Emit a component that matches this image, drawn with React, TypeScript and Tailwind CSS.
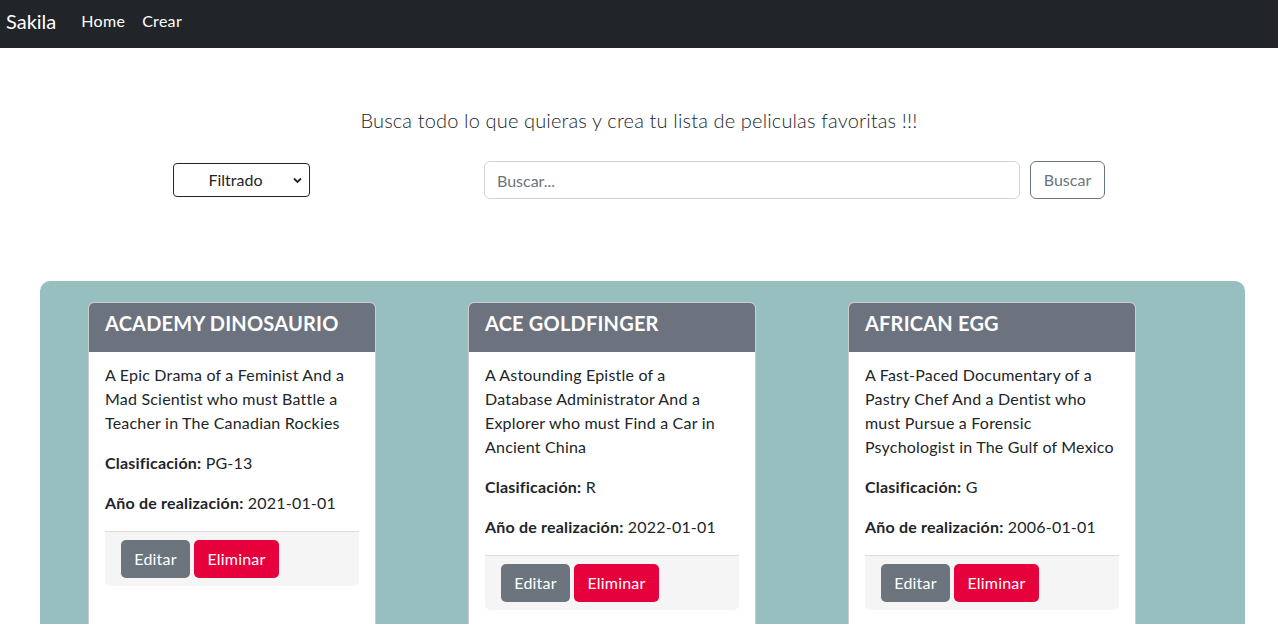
const movies = [
  {
    title: 'ACADEMY DINOSAURIO',
    description: ['A Epic Drama of a Feminist And a', 'Mad Scientist who must Battle a', 'Teacher in The Canadian Rockies'],
    rating: 'PG-13',
    year: '2021-01-01',
  },
  {
    title: 'ACE GOLDFINGER',
    description: ['A Astounding Epistle of a', 'Database Administrator And a', 'Explorer who must Find a Car in', 'Ancient China'],
    rating: 'R',
    year: '2022-01-01',
  },
  {
    title: 'AFRICAN EGG',
    description: ['A Fast-Paced Documentary of a', 'Pastry Chef And a Dentist who', 'must Pursue a Forensic', 'Psychologist in The Gulf of Mexico'],
    rating: 'G',
    year: '2006-01-01',
  },
];

function MovieCard({ movie }: { movie: (typeof movies)[number] }) {
  return (
    <div className="w-[288px] h-[360px] shrink-0 bg-white border border-black/20 rounded-[6px] overflow-hidden self-start">
      {/* Header */}
      <div className="bg-[#6c727e] px-4 pt-2 pb-4 h-[49px]">
        <h5 className="text-white text-[20px] font-bold leading-[24px] tracking-[0.2px]">{movie.title}</h5>
      </div>
      <div className="px-4 pt-[11px] text-[16px] leading-[24px] text-[#212529] tracking-[0.2px]">
        <p className="mb-4">
          {movie.description.map((line) => (
            <span key={line} className="block whitespace-nowrap">
              {line}
            </span>
          ))}
        </p>
        <p className="mb-4">
          <span className="font-bold">Clasificación:</span> {movie.rating}
        </p>
        <p className="mb-4">
          <span className="font-bold">Año de realización:</span> {movie.year}
        </p>
        <div className="border-t border-[#dcdcdc] bg-[#f5f5f5] rounded-b-[5px] px-4 py-2 flex gap-1">
          <button className="h-[38px] w-[69px] rounded-[5px] bg-[#6c757d] text-white">Editar</button>
          <button className="h-[38px] w-[85px] rounded-[5px] bg-[#e6003c] text-white">Eliminar</button>
        </div>
      </div>
    </div>
  );
}

export default function App() {
  return (
    <div className="h-[624px] overflow-hidden bg-white font-['Lato','Noto_Sans',sans-serif] text-[#212529]">
      {/* Navbar */}
      <nav className="h-12 bg-[#212529] flex items-center px-[6px] pb-[6px]">
        <span className="text-white text-[20px] mr-[25px]">Sakila</span>
        <a className="text-white text-[16px] mr-[17px] tracking-[0.3px]">Home</a>
        <a className="text-white text-[16px] tracking-[0.3px]">Crear</a>
      </nav>

      <h1 className="pt-[57px] text-center text-[20px] leading-[30px] font-light tracking-[0.15px]">
        Busca todo lo que quieras y crea tu lista de peliculas favoritas !!!
      </h1>

      {/* Search row */}
      <div className="mt-[26px] flex items-center pl-[173px]">
        <div className="relative w-[137px] h-[34px] border border-[#212529] rounded-[4px] flex items-center justify-center">
          <span className="text-[16px] pr-[12px]">Filtrado</span>
          <svg className="absolute right-[7px] top-[13px]" width="9" height="7" viewBox="0 0 9 7" fill="none">
            <path d="M1 1.5l3.5 3.5 3.5-3.5" stroke="#212529" strokeWidth="1.8" />
          </svg>
        </div>
        <input
          placeholder="Buscar..."
          className="ml-[174px] w-[536px] h-[38px] border border-[#ced4da] rounded-[6px] px-3 text-[16px] placeholder:text-[#6c757d] outline-none"
        />
        <button className="ml-[10px] w-[75px] h-[38px] border border-[#6c757d] rounded-[6px] text-[#6c757d] text-[16px]">
          Buscar
        </button>
      </div>

      {/* Movie list */}
      <div className="mt-[82px] ml-[40px] w-[1205px] h-[400px] bg-[#98bfbf] rounded-t-[10px] pt-[21px] pl-[48px] flex gap-[92px]">
        {movies.map((m) => (
          <MovieCard key={m.title} movie={m} />
        ))}
      </div>
    </div>
  );
}
